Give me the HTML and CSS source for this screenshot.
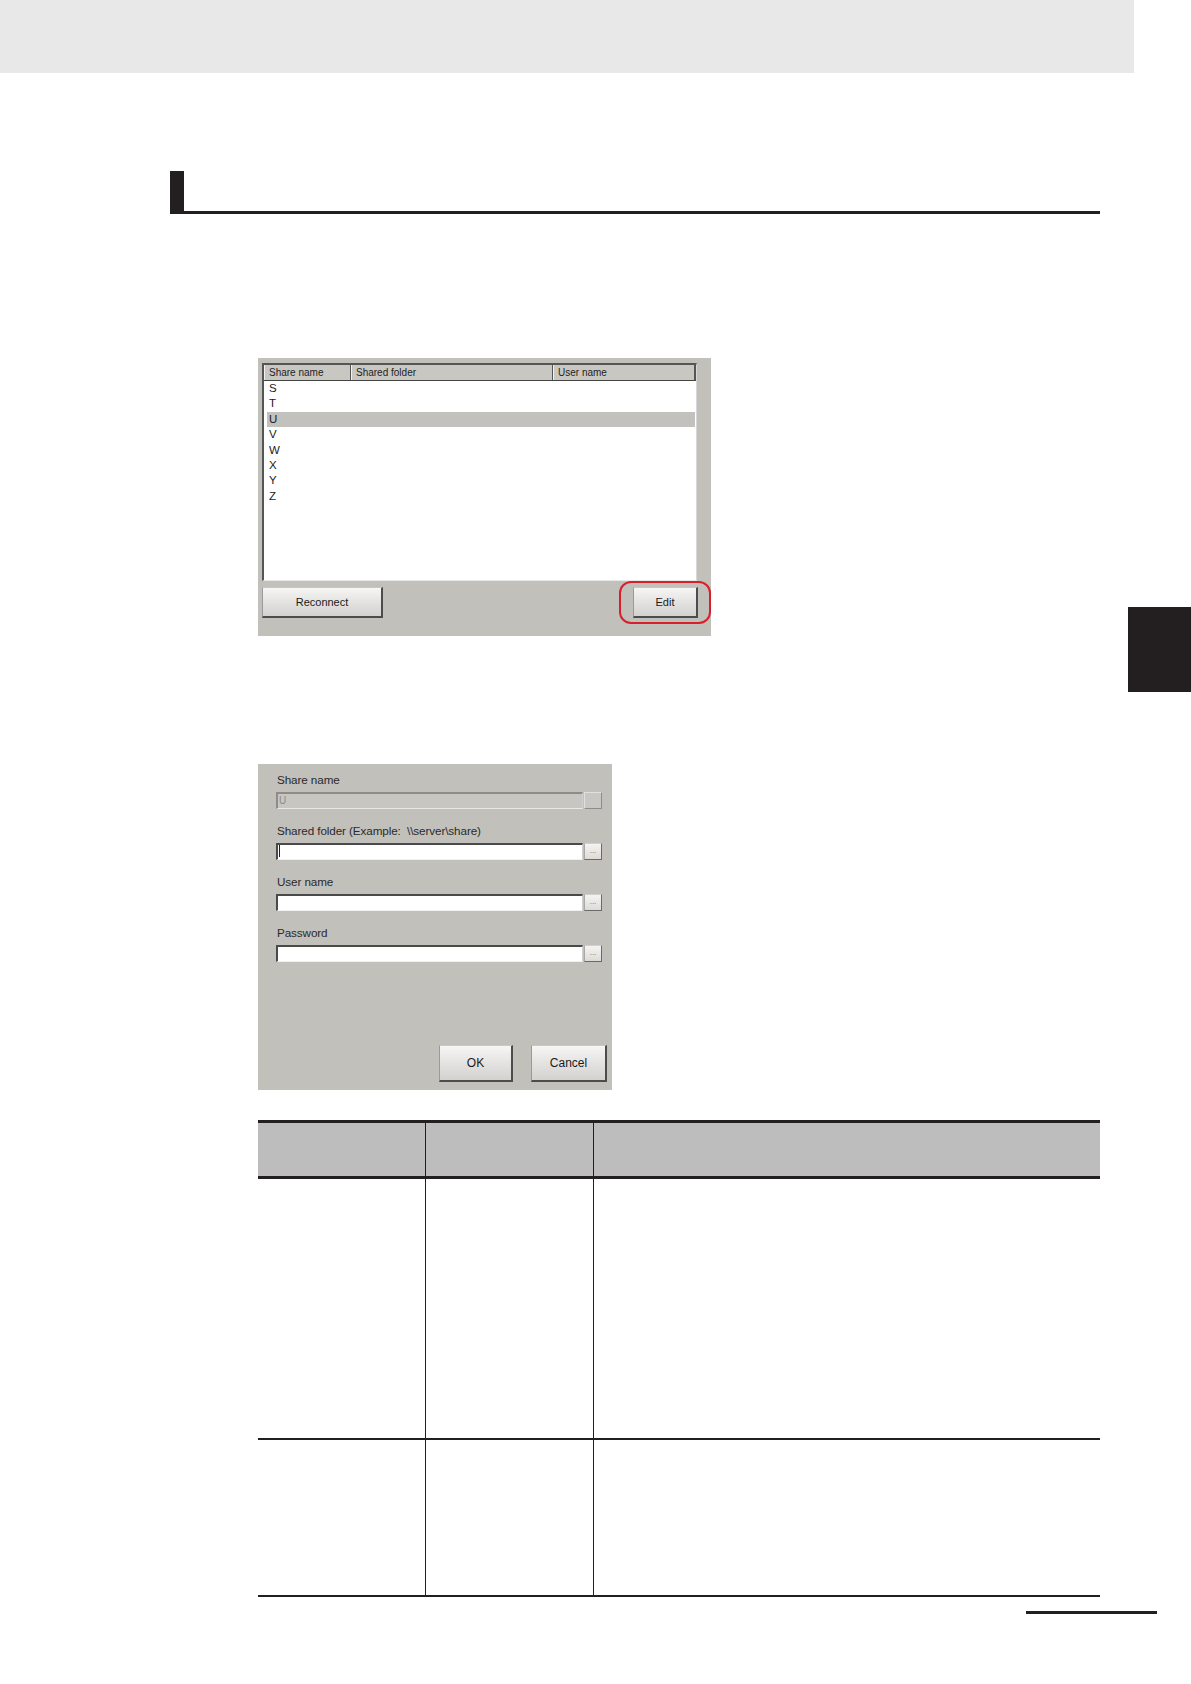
FILE: index.html
```html
<!DOCTYPE html>
<html>
<head>
<meta charset="utf-8">
<title>Network drive settings</title>
<link rel="stylesheet" href="styles.css">
</head>
<body>
<div class="topband"></div>
<div class="sidetab"></div>
<div class="main">
  <div class="heading"></div>

  <div class="shot1">
    <div class="listbox">
      <div class="listhead">
        <div class="hcell c1">Share name</div>
        <div class="hcell c2">Shared folder</div>
        <div class="hcell c3">User name</div>
      </div>
      <div class="rows">
        <div class="row">S</div>
        <div class="row">T</div>
        <div class="row sel">U</div>
        <div class="row">V</div>
        <div class="row">W</div>
        <div class="row">X</div>
        <div class="row">Y</div>
        <div class="row">Z</div>
      </div>
    </div>
    <div class="btnrow">
      <div class="btn reconnect">Reconnect</div>
      <div class="btn edit">Edit<span class="ring"></span></div>
    </div>
  </div>

  <div class="shot2">
    <div class="group">
      <div class="label">Share name</div>
      <div class="fieldrow">
        <div class="field disabled">U</div>
        <div class="dots disabled"></div>
      </div>
    </div>
    <div class="group">
      <div class="label">Shared folder (Example:&nbsp; \\server\share)</div>
      <div class="fieldrow">
        <div class="field"><span class="caret"></span></div>
        <div class="dots">...</div>
      </div>
    </div>
    <div class="group">
      <div class="label">User name</div>
      <div class="fieldrow">
        <div class="field"></div>
        <div class="dots">...</div>
      </div>
    </div>
    <div class="group">
      <div class="label">Password</div>
      <div class="fieldrow">
        <div class="field"></div>
        <div class="dots">...</div>
      </div>
    </div>
    <div class="dlgbtns">
      <div class="btn ok">OK</div>
      <div class="btn cancel">Cancel</div>
    </div>
  </div>

  <div class="table">
    <div class="thead">
      <div class="th col1"></div>
      <div class="th col2"></div>
      <div class="th col3"></div>
    </div>
    <div class="trow r1">
      <div class="td col1"></div>
      <div class="td col2"></div>
      <div class="td col3"></div>
    </div>
    <div class="trow r2">
      <div class="td col1"></div>
      <div class="td col2"></div>
      <div class="td col3"></div>
    </div>
  </div>
</div>
<div class="pagemark"></div>
</body>
</html>
```

FILE: styles.css
```css
html, body {
  margin: 0;
  padding: 0;
  background: #ffffff;
  font-family: "Liberation Sans", Arial, sans-serif;
  color: #231f20;
}
body {
  position: relative;
  width: 1191px;
  min-height: 1684px;
}
.topband {
  width: 1134px;
  height: 73px;
  background: #e8e8e8;
}
.sidetab {
  position: absolute;
  left: 1128px;
  top: 607px;
  width: 63px;
  height: 85px;
  background: #231f20;
}
.main {
  margin-left: 170px;
  width: 930px;
}
.heading {
  margin-top: 98px;
  height: 40px;
  border-left: 14px solid #231f20;
  border-bottom: 3px solid #231f20;
}

/* ---------- screenshot 1 ---------- */
.shot1 {
  margin-top: 144px;
  margin-left: 88px;
  width: 453px;
  height: 278px;
  box-sizing: border-box;
  padding: 5px 14px 0 4px;
  background: #c2c0bb;
  font-size: 11px;
  color: #1a1a1a;
}
.listbox {
  height: 218px;
  box-sizing: border-box;
  background: #ffffff;
  border-top: 2px solid #555555;
  border-left: 2px solid #555555;
  border-right: 1px solid #d8d8d8;
  border-bottom: 1px solid #e8e8e8;
}
.listhead {
  display: flex;
  height: 15px;
  background: #c9c7c2;
  border-bottom: 1px solid #444;
}
.hcell {
  box-sizing: border-box;
  height: 15px;
  line-height: 15px;
  padding-left: 4px;
  font-size: 10px;
  border-right: 1px solid #555;
  border-left: 1px solid #f2f2f2;
  color: #1e1e1e;
}
.c1 { width: 87px; }
.c2 { width: 202px; }
.c3 { flex: 1; border-right: 2px solid #555; }
.rows {
  padding-top: 0;
}
.row {
  height: 15.4px;
  line-height: 15px;
  margin: 0 1px 0 3px;
  padding-left: 2px;
  font-size: 11.5px;
}
.row.sel {
  background: #c3c1bd;
}
.btnrow {
  display: flex;
  justify-content: space-between;
  margin-top: 6px;
}
.btn {
  position: relative;
  box-sizing: border-box;
  display: flex;
  align-items: center;
  justify-content: center;
  background: linear-gradient(#f6f6f5, #e2e1df 55%, #d3d2cf);
  border-top: 1px solid #c8c8c8;
  border-left: 1px solid #9a9a9a;
  border-right: 2px solid #4c4c4c;
  border-bottom: 2px solid #4c4c4c;
  color: #1a1a1a;
}
.reconnect {
  width: 121px;
  height: 31px;
  font-size: 11px;
}
.edit {
  width: 65px;
  height: 31px;
  font-size: 11px;
  margin-right: -1px;
}
.ring {
  position: absolute;
  left: -15px;
  top: -7px;
  width: 92px;
  height: 43px;
  box-sizing: border-box;
  border: 2px solid #d8202c;
  border-radius: 12px;
}

/* ---------- screenshot 2 ---------- */
.shot2 {
  margin-top: 128px;
  margin-left: 88px;
  width: 354px;
  height: 326px;
  box-sizing: border-box;
  padding: 9px 10px 8px 18px;
  background: #c2c0bb;
  display: flex;
  flex-direction: column;
  font-size: 11.7px;
  color: #2a2a2a;
}
.group {
  margin-bottom: 15px;
}
.label {
  height: 14px;
  line-height: 14px;
  padding-left: 1px;
  margin-bottom: 5px;
  letter-spacing: -0.1px;
}
.fieldrow {
  display: flex;
  gap: 1px;
  height: 17px;
}
.field {
  width: 307px;
  box-sizing: border-box;
  background: #ffffff;
  border-top: 2px solid #4a4a4a;
  border-left: 2px solid #4a4a4a;
  border-right: 1px solid #d0d0d0;
  border-bottom: 1px solid #f0f0f0;
  font-size: 10px;
  line-height: 13px;
  padding-left: 1px;
  color: #8a8a8a;
}
.field.disabled {
  background: #c8c6c1;
  border-top: 2px solid #8e8c88;
  border-left: 2px solid #8e8c88;
  border-bottom: 1px solid #e8e8e8;
}
.caret {
  display: inline-block;
  width: 1px;
  height: 12px;
  background: #222;
  vertical-align: top;
}
.dots {
  width: 18px;
  box-sizing: border-box;
  background: linear-gradient(#f4f4f3, #dcdbd8);
  border-top: 1px solid #cfcfcf;
  border-left: 1px solid #a8a8a8;
  border-right: 1px solid #6a6a6a;
  border-bottom: 1px solid #6a6a6a;
  font-size: 8px;
  line-height: 14px;
  text-align: center;
  color: #666;
}
.dots.disabled {
  background: #c9c7c3;
  border-color: #e0e0e0 #8e8c88 #8e8c88 #e0e0e0;
}
.dlgbtns {
  margin-top: auto;
  display: flex;
  justify-content: flex-end;
  gap: 18px;
  margin-right: -5px;
}
.ok {
  width: 74px;
  height: 37px;
  font-size: 12px;
}
.cancel {
  width: 76px;
  height: 37px;
  font-size: 12px;
}

/* ---------- table ---------- */
.table {
  margin-top: 30px;
  margin-left: 88px;
  width: 842px;
}
.thead {
  display: flex;
  height: 53px;
  background: #bdbdbd;
  border-top: 3px solid #231f20;
  border-bottom: 3px solid #231f20;
}
.trow {
  display: flex;
  border-bottom: 2px solid #231f20;
}
.r1 { height: 259px; }
.r2 { height: 155px; }
.th, .td {
  box-sizing: border-box;
}
.col1 { width: 168px; border-right: 1px solid #231f20; }
.col2 { width: 168px; border-right: 1px solid #231f20; }
.col3 { flex: 1; }
.pagemark {
  margin-top: 14px;
  margin-left: 1026px;
  width: 131px;
  height: 3px;
  background: #231f20;
}
```
